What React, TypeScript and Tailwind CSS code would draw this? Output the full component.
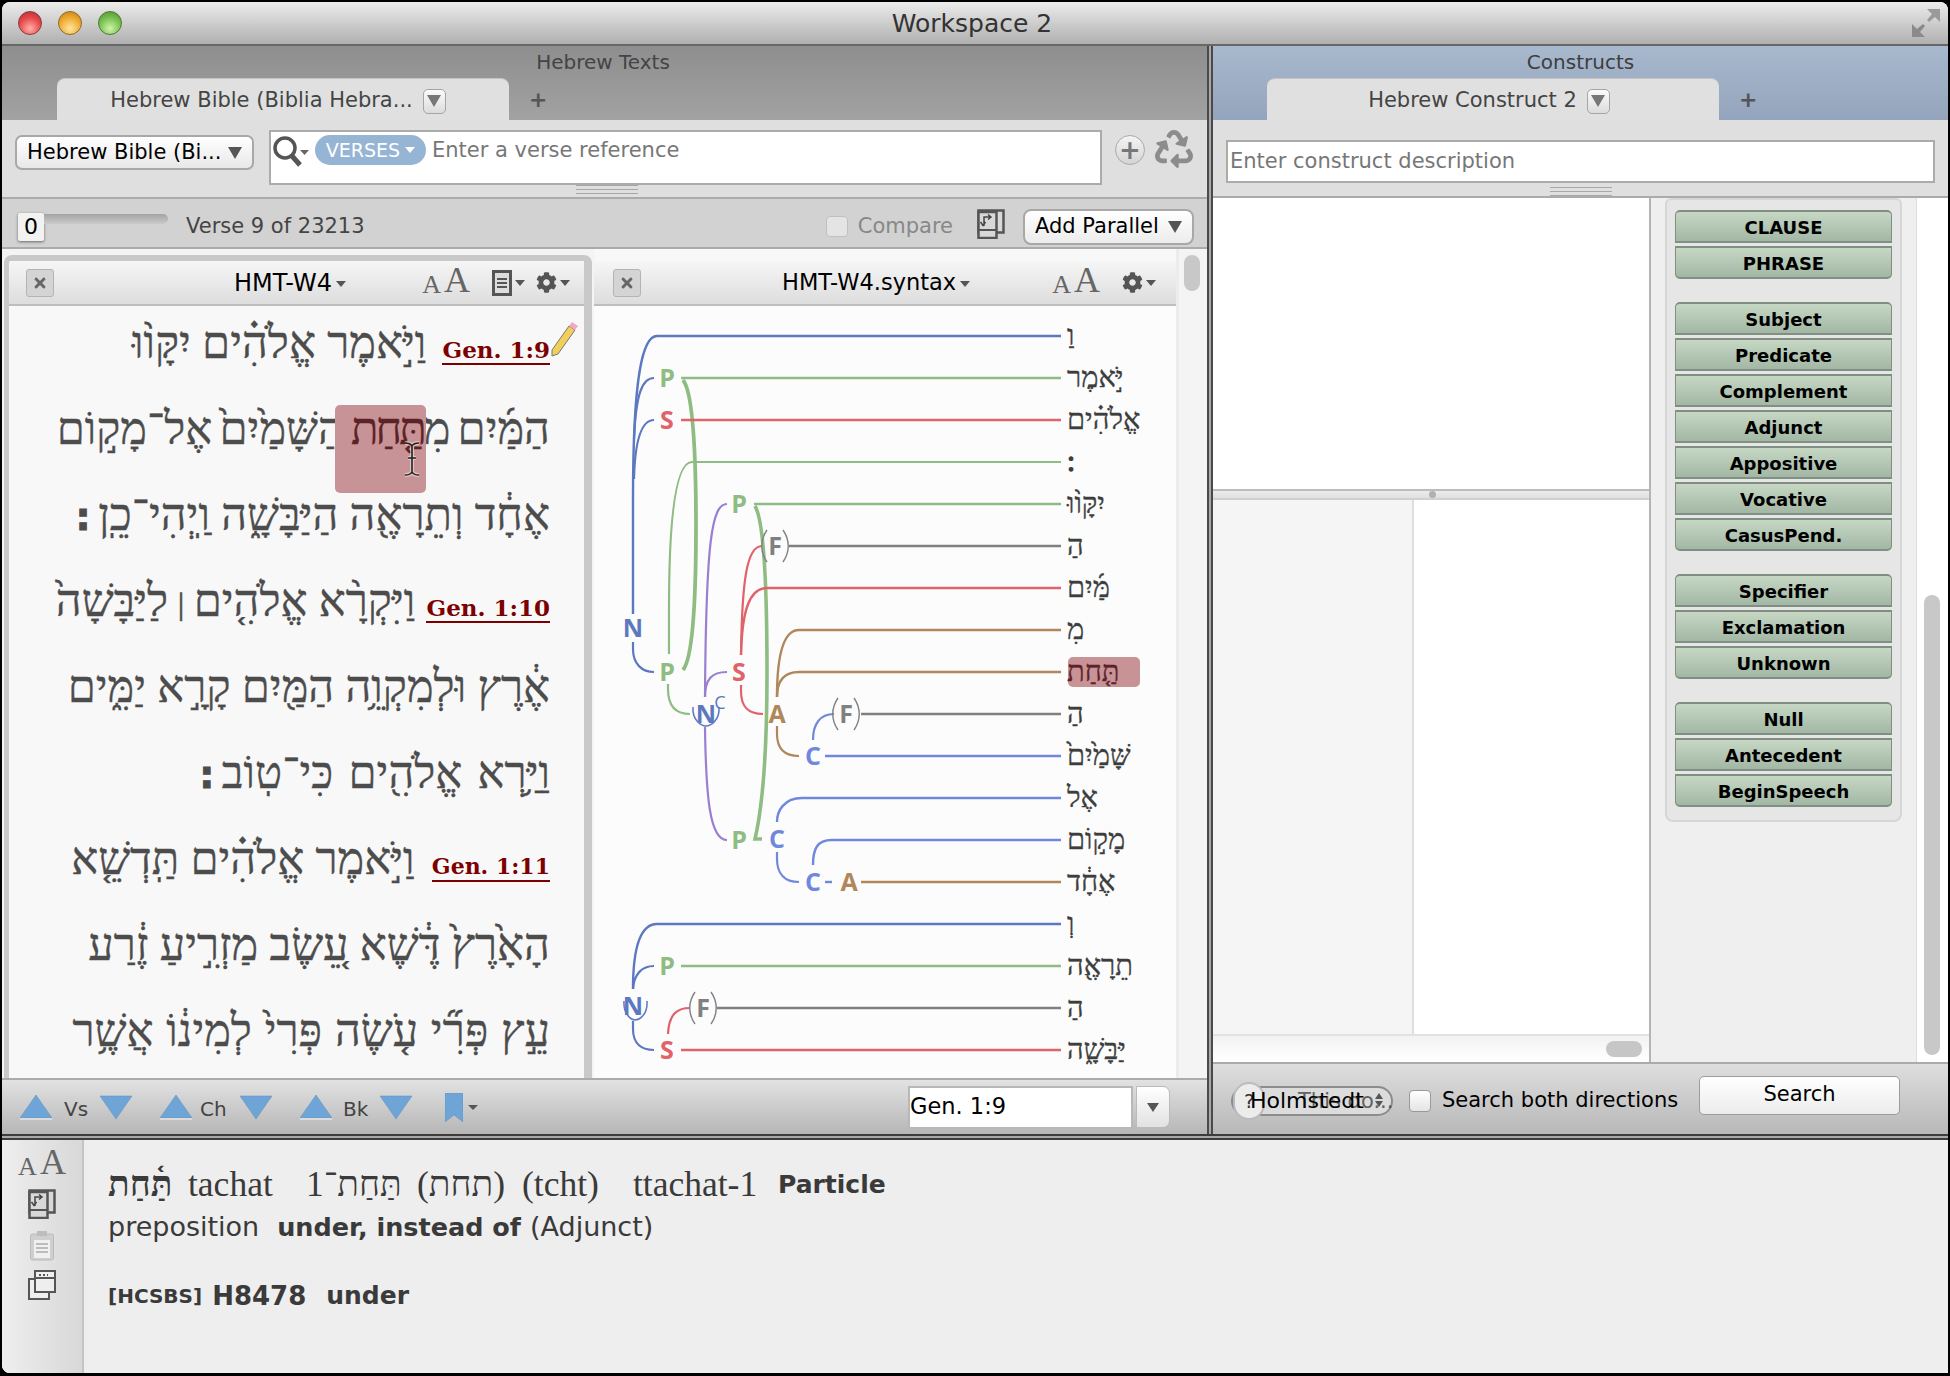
import React from 'react';
import { FaCog, FaRecycle, FaTimes } from 'react-icons/fa';

const sans = { fontFamily: '"DejaVu Sans", sans-serif' };

const Caret = ({ className = 'border-t-[#555]', w = 5, h = 6 }: { className?: string; w?: number; h?: number }) => (
    <svg width={w * 2} height={h} viewBox={`0 0 ${w * 2} ${h}`} className={className}>
        <polygon points={`0,0 ${w * 2},0 ${w},${h}`} fill="currentColor" />
    </svg>
);

const TabChevron = () => (
    <span className="w-[23px] h-[25px] rounded-[5px] border border-[#a5a5a5] bg-linear-to-b from-[#fbfbfb] to-[#dcdcdc] flex items-center justify-center">
        <Caret className="text-[#777]" w={7} h={12} />
    </span>
);

const Grip = () => (
    <div className="flex flex-col gap-[3px] w-[62px]">
        <div className="h-[1px] bg-[#a8a8a8]" />
        <div className="h-[1px] bg-[#a8a8a8]" />
        <div className="h-[1px] bg-[#a8a8a8]" />
    </div>
);

const SizeAA = ({ className = '' }: { className?: string }) => (
    <span className={`flex items-end text-[#666] leading-none ${className}`} style={{ fontFamily: '"Liberation Serif", serif' }}>
        <span className="text-[26px]">A</span>
        <span className="text-[36px] ml-[3px]">A</span>
    </span>
);

const CompareIcon = ({ className = '' }: { className?: string }) => (
    <svg width="28" height="30" viewBox="0 0 28 30" className={className}>
        <rect x="1.5" y="1.5" width="25" height="22" fill="#d8d8d8" stroke="#555" strokeWidth="2.5" />
        <rect x="1.5" y="3" width="18" height="26" fill="#d8d8d8" stroke="#555" strokeWidth="2.5" />
        <path d="M1.5 21 H19.5" stroke="#555" strokeWidth="2" />
        <path d="M7 17 V8 H13 M11 5.5 L14 8 L11 10.5 M8.5 13 L6 16.5 L3.5 13" fill="none" stroke="#444" strokeWidth="1.5" />
    </svg>
);

const CloseBox = () => (
    <span className="w-[28px] h-[28px] shrink-0 rounded-[3px] bg-[#d4d4d4] border border-[#b4b4b4] flex items-center justify-center text-[#666]">
        <FaTimes size={16} />
    </span>
);

const Tri = ({ up }: { up?: boolean }) => (
    <svg width="32" height="25" viewBox="0 0 32 25">
        {up ? (
            <>
                <polygon points="16,0 32,23 0,23" fill="#6fa5d6" stroke="#5d8fbd" strokeWidth="0.5" />
                <rect x="0" y="23" width="32" height="2" fill="#dcdcdc" />
            </>
        ) : (
            <polygon points="0,1 32,1 16,24" fill="#6fa5d6" stroke="#5d8fbd" strokeWidth="0.5" />
        )}
    </svg>
);

const Ref = ({ children, className = 'text-[23px]' }: { children: React.ReactNode; className?: string }) => (
    <span
        dir="ltr"
        className={`inline-block align-baseline font-bold text-[#7d0000] border-b-[2px] border-[#7d0000] leading-[27px] [-webkit-text-stroke:0px] ${className}`}
        style={{ fontFamily: '"DejaVu Serif", serif', unicodeBidi: 'isolate' }}
    >
        {children}
    </span>
);

const SofPasuq = () => (
    <span className="text-[38px] font-bold [-webkit-text-stroke:1px_#4c4c4c] mr-[8px]" style={sans}>׃</span>
);

const lineClass = 'h-[86px] leading-[86px] text-[45px] text-[#4c4c4c] whitespace-nowrap [-webkit-text-stroke:0.4px_#4c4c4c]';

const VerseText = () => (
    <div dir="rtl" className="pr-[34px] -mt-[6px]" style={{ fontFamily: '"Liberation Serif", "DejaVu Sans", serif' }}>
        <div className={`${lineClass} relative`}>
            <Ref className="text-[23px] ml-[5px]">Gen. 1:9</Ref>{' '}
            וַיֹּ֣אמֶר אֱלֹהִ֗ים יִקָּו֨וּ
            <svg width="28" height="36" viewBox="0 0 28 36" className="absolute right-[-28px] top-[22px]">
                <polygon points="2,28 19,4 25,8 8,32 2,34" fill="#f2cf5a" stroke="#777" strokeWidth="1" />
                <polygon points="19,4 22,0 28,4 25,8" fill="#eeaac6" />
            </svg>
        </div>
        <div className={`${lineClass} [word-spacing:-4px]`}>
            הַמַּ֜יִם מִ
            <span className="relative text-[#5c2226] tracking-[-3px] [-webkit-text-stroke:0.4px_#5c2226]">
                <span className="absolute left-[-16px] right-[-2px] top-[1px] h-[88px] rounded-[5px] bg-[#c89396]" />
                <span className="relative">תַּ֤חַת</span>
                <svg width="20" height="36" viewBox="0 0 20 36" className="absolute right-[2px] top-[37px]">
                    <path d="M3 2 C7 2 9 3 10 5 C11 3 13 2 17 2 M10 5 V31 M3 34 C7 34 9 33 10 31 C11 33 13 34 17 34 M6 17 H14" fill="none" stroke="#f4e4e4" strokeWidth="4" opacity="0.6" />
                    <path d="M3 2 C7 2 9 3 10 5 C11 3 13 2 17 2 M10 5 V31 M3 34 C7 34 9 33 10 31 C11 33 13 34 17 34 M6 17 H14" fill="none" stroke="#222" strokeWidth="1.6" />
                </svg>
            </span>{' '}
            הַשָּׁמַ֙יִם֙ אֶל־מָק֣וֹם
        </div>
        <div className={lineClass}>
            אֶחָ֔ד וְתֵרָאֶ֖ה הַיַּבָּשָׁ֑ה וַֽיְהִי־כֵֽן
            <SofPasuq />
        </div>
        <div className={lineClass}>
            <Ref>Gen. 1:10</Ref>{' '}
            וַיִּקְרָ֨א אֱלֹהִ֤ים
            <span className="text-[24px] mx-[6px]">׀</span>
            לַיַּבָּשָׁה֙
        </div>
        <div className={lineClass}>אֶ֔רֶץ וּלְמִקְוֵ֥ה הַמַּ֖יִם קָרָ֣א יַמִּ֑ים</div>
        <div className={`${lineClass} [word-spacing:4px]`}>
            וַיַּ֥רְא אֱלֹהִ֖ים כִּי־טֽוֹב
            <SofPasuq />
        </div>
        <div className={lineClass}>
            <Ref className="text-[22px] ml-[6px]">Gen. 1:11</Ref>{' '}
            וַיֹּ֣אמֶר אֱלֹהִ֗ים תַּֽדְשֵׁ֤א
        </div>
        <div className={lineClass}>הָאָ֙רֶץ֙ דֶּ֔שֶׁא עֵ֚שֶׂב מַזְרִ֣יעַ זֶ֔רַע</div>
        <div className={`${lineClass} [word-spacing:1.5px]`}>עֵ֣ץ פְּרִ֞י עֹ֤שֶׂה פְּרִי֙ לְמִינ֔וֹ אֲשֶׁ֥ר</div>
    </div>
);

const BLUE = '#5b78c0';
const GREEN = '#8fbc82';
const RED = '#e0626a';
const GRAY = '#808080';
const BROWN = '#b0875a';
const PURPLE = '#9b7fcf';
const LBLUE = '#6f88de';

const wires: [string, string, number][] = [
    ['M681 381 C690 392 694 440 694 527 C694 610 690 660 681 671', GREEN, 3.8],
    ['M753 507 C761 520 765 570 765 674 C765 760 760 810 753 840 H760', GREEN, 3.6],
    ['M1059 337 H655 C640 337 631 380 631 500 V615', BLUE, 2.4],
    ['M652 379 C640 379 634 395 632 440', BLUE, 2.2],
    ['M652 421 C640 421 633 440 632 480', BLUE, 2.2],
    ['M631 643 V650 C631 665 640 673 652 673', BLUE, 2.2],
    ['M1059 379 H679', GREEN, 2.4],
    ['M1059 421 H679', RED, 2.4],
    ['M1059 463 H690 C675 463 667 510 667 610 V655', GREEN, 2.2],
    ['M666 685 V690 C666 708 674 715 688 715', GREEN, 2.2],
    ['M725 505 C710 505 704 540 703 698', PURPLE, 2.2],
    ['M725 673 C710 673 703 680 703 698', PURPLE, 2.2],
    ['M703 728 C704 800 708 841 725 841', PURPLE, 2.2],
    ['M1059 505 H752', GREEN, 2.4],
    ['M760 547 C745 547 740 580 739 656', RED, 2.2],
    ['M1059 589 H765 C748 589 740 610 739 656', RED, 2.4],
    ['M739 686 V692 C739 708 746 715 761 715', RED, 2.2],
    ['M1059 547 H787', GRAY, 2.4],
    ['M1059 631 H797 C783 631 775 650 775 698', BROWN, 2.4],
    ['M1059 673 H797 C783 673 775 680 775 698', BROWN, 2.4],
    ['M775 727 V735 C775 750 783 757 797 757', BROWN, 2.2],
    ['M1059 715 H859', GRAY, 2.4],
    ['M832 715 C818 715 811 725 811 741', LBLUE, 2.2],
    ['M1059 757 H823', LBLUE, 2.4],
    ['M1059 799 H800 C782 799 775 812 775 823', LBLUE, 2.4],
    ['M1059 841 H830 C815 841 811 850 811 866', LBLUE, 2.4],
    ['M775 853 V860 C775 875 783 883 797 883', LBLUE, 2.2],
    ['M823 883 H830', LBLUE, 2.4],
    ['M1059 883 H859', BROWN, 2.4],
    ['M1059 925 H655 C640 925 631 945 631 990', BLUE, 2.4],
    ['M652 967 C640 967 632 975 631 990', BLUE, 2.2],
    ['M1059 967 H679', GREEN, 2.4],
    ['M1059 1009 H715', GRAY, 2.4],
    ['M688 1009 C675 1009 667 1015 666 1035', RED, 2.2],
    ['M631 1022 V1030 C631 1045 640 1051 652 1051', BLUE, 2.2],
    ['M1059 1051 H679', RED, 2.4],
    ['M691 708 C690 722 700 727 704 727 C708 727 718 722 717 708', BLUE, 1.5],
    ['M622 1002 C621 1016 630 1021 633 1021 C637 1021 646 1016 645 1002', BLUE, 1.5],
];

const nodes: [string, number, number, string][] = [
    ['N', 631, 629, BLUE],
    ['P', 665, 379, GREEN],
    ['S', 665, 421, RED],
    ['P', 737, 505, GREEN],
    ['F', 773, 547, GRAY],
    ['S', 737, 673, RED],
    ['P', 665, 673, GREEN],
    ['N', 704, 715, BLUE],
    ['A', 775, 715, BROWN],
    ['F', 844, 715, GRAY],
    ['C', 811, 757, LBLUE],
    ['C', 775, 840, LBLUE],
    ['P', 737, 841, GREEN],
    ['C', 811, 883, LBLUE],
    ['A', 847, 883, BROWN],
    ['N', 631, 1007, BLUE],
    ['P', 665, 967, GREEN],
    ['F', 701, 1009, GRAY],
    ['S', 665, 1051, RED],
];

const parens: [number, number][] = [[773, 547], [844, 715], [701, 1009]];

const words = ['וַ', 'יֹּ֣אמֶר', 'אֱלֹהִ֗ים', '׃', 'יִקָּו֨וּ', 'הַ', 'מַּ֜יִם', 'מִ', 'תַּ֤חַת', 'הַ', 'שָּׁמַ֙יִם֙', 'אֶל', 'מָק֣וֹם', 'אֶחָ֔ד', 'וְ', 'תֵרָאֶ֖ה', 'הַ', 'יַּבָּשָׁ֑ה'];

const SyntaxTree = () => (
    <svg width="585" height="771" viewBox="592 307 585 771" className="block">
        <rect x="1066" y="658" width="72" height="30" rx="5" fill="#c89396" />
        {wires.map(([d, c, w], i) => (
            <path key={i} d={d} fill="none" stroke={c} strokeWidth={w} />
        ))}
        {parens.map(([x, y], i) => (
            <g key={i} fill="none" stroke={GRAY} strokeWidth="1.4">
                <path d={`M${x - 8} ${y - 16} C${x - 15} ${y - 6} ${x - 15} ${y + 6} ${x - 8} ${y + 16}`} />
                <path d={`M${x + 8} ${y - 16} C${x + 15} ${y - 6} ${x + 15} ${y + 6} ${x + 8} ${y + 16}`} />
            </g>
        ))}
        {nodes.map(([t, x, y, c], i) => (
            <text key={i} x={x} y={y + 9} textAnchor="middle" fill={c} fontSize="25" fontWeight="700" fontFamily="'Open Sans', sans-serif">
                {t}
            </text>
        ))}
        <text x="718" y="710" textAnchor="middle" fill={BLUE} fontSize="18" fontFamily="'Open Sans', sans-serif">C</text>
        {words.map((w, i) => (
            <text
                key={i}
                x="1065"
                y={337 + i * 42 + 9}
                fill={i === 8 ? '#5c2226' : '#3d3d3d'}
                stroke={i === 8 ? '#5c2226' : '#3d3d3d'}
                strokeWidth={i === 3 ? 1.4 : 0.35}
                fontSize="29"
                fontFamily="'Liberation Serif', 'DejaVu Sans', serif"
            >
                {w}
            </text>
        ))}
    </svg>
);

const PaneHeader = ({ title, extra }: { title: string; extra?: boolean }) => (
    <div className={`h-[45px] shrink-0 flex items-center border-b-[2px] border-[#bdbdbd] bg-linear-to-b from-[#f6f6f6] to-[#dddddd] ${extra ? 'pl-[17px]' : 'pl-[19px]'}`} style={sans}>
        <CloseBox />
        <div className={`flex items-center gap-[4px] text-black ${extra ? 'ml-[180px] text-[24px]' : 'ml-[141px] text-[22.5px]'}`}>
            <span>{title}</span>
            <Caret className="text-[#555] mt-[3px]" />
        </div>
        <div className={`ml-auto flex items-center gap-[11px] text-[#555] ${extra ? 'pr-[14px]' : 'pr-[20px]'}`}>
            <SizeAA className="mr-[11px] mb-[6px]" />
            {extra && (
                <span className="flex items-center gap-[3px]">
                    <span className="w-[20px] h-[26px] border-[3px] border-[#555] bg-[#ddd] flex flex-col gap-[2px] justify-center px-[2px]">
                        <span className="h-[2px] bg-[#555]" />
                        <span className="h-[2px] bg-[#555]" />
                        <span className="h-[2px] bg-[#555]" />
                    </span>
                    <Caret />
                </span>
            )}
            <span className="flex items-center gap-[3px]">
                <FaCog size={21} />
                <Caret />
            </span>
        </div>
    </div>
);

const LeftColumn = () => (
    <div className="w-[1205px] flex flex-col shrink-0">
        <div className="h-[74px] shrink-0 flex flex-col bg-linear-to-b from-[#8e8e8e] to-[#a2a2a2]">
            <div className="h-[32px] flex items-center justify-center text-[20px] text-[#444] pr-[3px]">Hebrew Texts</div>
            <div className="h-[42px] flex items-end pl-[55px]">
                <div className="w-[452px] h-[42px] pt-[3px] pr-[10px] rounded-t-[8px] bg-[#e0e0e0] border-t border-[#c4c4c4] flex items-center justify-center gap-[10px] text-[21px] text-[#444]">
                    <span>Hebrew Bible (Biblia Hebra...</span>
                    <TabChevron />
                </div>
                <span className="ml-[20px] mb-[9px] text-[22px] leading-none text-[#555] font-bold">+</span>
            </div>
        </div>
        <div className="h-[79px] shrink-0 bg-[#dfdfdf] border-b-[2px] border-[#ababab] relative">
            <div className="flex items-start pl-[13px] pt-[11px]">
                <div className="w-[239px] h-[35px] mt-[4px] rounded-[7px] border-[2px] border-[#a8a8a8] bg-linear-to-b from-white to-[#e8e8e8] flex items-center pl-[10px] pr-[10px] justify-between text-[21px] text-black">
                    <span>Hebrew Bible (Bi...</span>
                    <Caret className="text-[#555]" w={7} h={12} />
                </div>
                <div className="ml-[15px] w-[833px] h-[55px] -mt-[1px] bg-white border-[2px] border-[#ababab] flex items-start pt-[3px] pl-[1px]">
                    <svg width="38" height="34" viewBox="0 0 38 34" className="shrink-0">
                        <circle cx="13" cy="13" r="10" fill="none" stroke="#555" strokeWidth="3.5" />
                        <path d="M20 21 L28 30" stroke="#555" strokeWidth="5" />
                        <polygon points="28,15 37,15 32.5,20" fill="#666" />
                    </svg>
                    <span className="ml-[5px] w-[111px] h-[30px] rounded-full bg-[#96b4d4] text-white text-[19px] flex items-center justify-center gap-[5px]">
                        VERSES
                        <Caret className="text-white" />
                    </span>
                    <span className="ml-[6px] text-[21px] text-[#777] leading-[30px]">Enter a verse reference</span>
                </div>
                <span className="ml-[13px] mt-[4px] w-[30px] h-[30px] rounded-full border border-[#aaa] bg-linear-to-b from-[#f4f4f4] to-[#d4d4d4] flex items-center justify-center text-[#777] text-[26px] font-bold leading-none">+</span>
                <span className="ml-[10px] -mt-[1px] text-[#8c8c8c]">
                    <FaRecycle size={38} />
                </span>
            </div>
            <div className="absolute left-[574px] bottom-[3px]">
                <Grip />
            </div>
        </div>
        <div className="h-[50px] shrink-0 bg-[#d2d2d2] border-b-[2px] border-[#ababab] flex items-center pt-[7px] pl-[16px]">
            <div className="flex items-start w-[150px] h-[28px]">
                <span className="w-[26px] h-[28px] bg-[#f2f2f2] rounded-[2px] shadow-[0_1px_3px_#666] flex items-center justify-center text-[22px] text-black">0</span>
                <span className="w-[125px] h-[10px] rounded-r-[5px] bg-linear-to-b from-[#a4a4a4] to-[#cacaca] mt-[1px]" />
            </div>
            <span className="ml-[18px] text-[21px] text-[#444]">Verse 9 of 23213</span>
            <div className="ml-auto flex items-center pr-[13px]">
                <span className="w-[22px] h-[21px] rounded-[4px] border border-[#c0c0c0] bg-[#e4e4e4]" />
                <span className="ml-[10px] text-[21px] text-[#888]">Compare</span>
                <CompareIcon className="ml-[24px] mb-[6px]" />
                <div className="ml-[18px] w-[171px] h-[36px] rounded-[8px] border-[2px] border-[#a8a8a8] bg-linear-to-b from-white to-[#ececec] flex items-center justify-between px-[10px] text-[21px] text-black">
                    <span>Add Parallel</span>
                    <Caret className="text-[#555]" w={7} h={12} />
                </div>
            </div>
        </div>
        <div className="flex-1 flex bg-[#f4f4f4] min-h-0">
            <div className="w-[588px] shrink-0 mt-[6px] ml-[2px] border-l-[5px] border-t-[6px] border-r-[8px] border-[#c9c9c9] rounded-t-[8px] flex flex-col bg-[#f8f8f8] overflow-hidden">
                <PaneHeader title="HMT-W4" extra />
                <VerseText />
            </div>
            <div className="w-[585px] shrink-0 ml-[2px] flex flex-col bg-[#fcfcfc] border-r-[3px] border-[#ececec] overflow-hidden">
                <div className="h-[12px] shrink-0 bg-[#f8f8f8]" />
                <PaneHeader title="HMT-W4.syntax" />
                <SyntaxTree />
            </div>
            <div className="flex-1 pl-[5px] pt-[6px]">
                <div className="w-[16px] h-[36px] rounded-full bg-[#c8c8c8]" />
            </div>
        </div>
        <div className="h-[56px] shrink-0 border-t-[2px] border-[#ababab] bg-linear-to-b from-[#e2e2e2] to-[#b6b6b6] flex items-center pl-[18px] text-[#444]">
            <Tri up />
            <span className="ml-[12px] mt-[3px] text-[20px] w-[36px]">Vs</span>
            <Tri />
            <span className="ml-[28px]"><Tri up /></span>
            <span className="ml-[8px] mt-[3px] text-[20px] w-[40px]">Ch</span>
            <Tri />
            <span className="ml-[28px]"><Tri up /></span>
            <span className="ml-[11px] mt-[3px] text-[20px] w-[37px]">Bk</span>
            <Tri />
            <svg width="18" height="29" viewBox="0 0 18 29" className="ml-[33px]">
                <polygon points="0,0 18,0 18,29 9,22 0,29" fill="#6fa5d6" stroke="#5d8fbd" strokeWidth="0.5" />
            </svg>
            <Caret className="ml-[5px] text-[#555]" w={5} h={5} />
            <div className="ml-auto flex items-center pr-[37px]">
                <div className="w-[225px] h-[43px] bg-white border-[2px] border-[#b8b8b8] flex items-center text-[22.5px] text-black">Gen. 1:9</div>
                <div className="ml-[3px] w-[34px] h-[42px] rounded-r-[7px] border border-[#bbb] bg-linear-to-b from-white to-[#e2e2e2] flex items-center justify-center">
                    <Caret className="text-[#555]" w={6} h={9} />
                </div>
            </div>
        </div>
    </div>
);

const group = (items: string[]) => (
    <div className="flex flex-col gap-[3px]">
        {items.map((t, i) => (
            <div
                key={t}
                className={`h-[33px] flex items-center justify-center pt-[2px] text-[18px] font-bold text-black bg-linear-to-b from-[#c6d8c4] to-[#a3b7a5] border-x border-y-[2px] border-[#7f9083] ${i === 0 ? 'rounded-t-[5px]' : ''} ${i === items.length - 1 ? 'rounded-b-[5px]' : ''}`}
            >
                {t}
            </div>
        ))}
    </div>
);

const RightColumn = () => (
    <div className="flex-1 flex flex-col min-w-0">
        <div className="h-[74px] shrink-0 flex flex-col bg-linear-to-b from-[#a8b9ce] to-[#93a4bc]">
            <div className="h-[32px] flex items-center justify-center text-[20px] text-[#3e3e3e]">Constructs</div>
            <div className="h-[42px] flex items-end pl-[54px]">
                <div className="w-[452px] h-[42px] pt-[3px] pr-[8px] rounded-t-[8px] bg-[#e0e0e0] border-t border-[#c4c4c4] flex items-center justify-center gap-[10px] text-[21px] text-[#444]">
                    <span>Hebrew Construct 2</span>
                    <TabChevron />
                </div>
                <span className="ml-[20px] mb-[9px] text-[22px] leading-none text-[#555] font-bold">+</span>
            </div>
        </div>
        <div className="h-[78px] shrink-0 bg-[#dfdfdf] border-b-[2px] border-[#ababab] flex flex-col items-center pt-[20px] px-[13px]">
            <div className="w-full h-[44px] bg-white border-[2px] border-[#ababab] flex items-center pl-[2px] text-[21px] text-[#777]">Enter construct description</div>
            <div className="mt-[4px]">
                <Grip />
            </div>
        </div>
        <div className="flex-1 flex min-h-0">
            <div className="w-[436px] shrink-0 flex flex-col bg-white">
                <div className="h-[291px] shrink-0" />
                <div className="h-[11px] shrink-0 border-t-[2px] border-[#bcbcbc] bg-linear-to-b from-[#ececec] to-[#e0e0e0] border-b-[2px] border-b-[#d0d0d0] flex justify-center">
                    <span className="w-[7px] h-[7px] rounded-full bg-[#b0b0b0] mr-[-3px]" />
                </div>
                <div className="flex-1 flex min-h-0">
                    <div className="w-[201px] bg-[#f5f5f5] border-r-[2px] border-[#dedede]" />
                    <div className="flex-1 bg-white" />
                </div>
                <div className="h-[28px] shrink-0 border-t-[2px] border-[#e2e2e2] bg-linear-to-b from-[#f2f2f2] to-[#ffffff] flex items-center justify-end pr-[7px]">
                    <span className="w-[36px] h-[16px] rounded-full bg-[#c6c6c6]" />
                </div>
            </div>
            <div className="flex-1 flex bg-[#efefef] border-l-[2px] border-[#b4b4b4]">
                <div className="w-[266px] shrink-0 border-r-[1px] border-[#dcdcdc] pl-[14px]">
                    <div className="w-[237px] h-[624px] rounded-b-[8px] rounded-t-[6px] border-[2px] border-[#d6d6d6] bg-[#e6e6e6] px-[8px] pt-[10px] flex flex-col gap-[23px]">
                        {group(['CLAUSE', 'PHRASE'])}
                        {group(['Subject', 'Predicate', 'Complement', 'Adjunct', 'Appositive', 'Vocative', 'CasusPend.'])}
                        {group(['Specifier', 'Exclamation', 'Unknown'])}
                        {group(['Null', 'Antecedent', 'BeginSpeech'])}
                    </div>
                </div>
                <div className="flex-1 pl-[7px] pt-[397px] bg-white">
                    <div className="w-[16px] h-[460px] rounded-full bg-[#c8c8c8]" />
                </div>
            </div>
        </div>
        <div className="h-[72px] shrink-0 border-t-[2px] border-[#ababab] bg-linear-to-b from-[#dedede] to-[#b8b8b8] flex items-center pl-[18px]">
            <div className="relative w-[162px] h-[30px] mt-[4px] rounded-full border-[2px] border-[#8c8c8c] bg-[#dcdcdc] whitespace-nowrap">
                <span className="absolute left-[0px] top-[-6px] w-[32px] h-[38px] rounded-full border-[2px] border-[#bbb] bg-[#ececec]" />
                <span className="absolute left-[11px] top-[0px] text-[20px] leading-[26px] text-[#333]">?</span>
                <span className="absolute left-[142px] top-[5px] flex flex-col gap-[2px] text-[#555]">
                    <Caret className="rotate-180" w={4} h={6} />
                    <Caret w={4} h={6} />
                </span>
                <span className="absolute left-[65px] top-[0px] text-[21px] leading-[26px] text-[#444] opacity-80">This do...</span>
                <span className="absolute left-[17px] top-[0px] text-[22px] leading-[26px] text-black">Holmstedt</span>
            </div>
            <span className="ml-[16px] mt-[4px] w-[22px] h-[22px] rounded-[4px] border border-[#999] bg-linear-to-b from-white to-[#e4e4e4]" />
            <span className="ml-[11px] mt-[3px] text-[21px] text-black">Search both directions</span>
            <div className="ml-auto mr-[48px] mb-[8px] w-[201px] h-[39px] rounded-[5px] border border-[#9c9c9c] bg-linear-to-b from-white to-[#ececec] flex items-center justify-center text-[21px] text-black">Search</div>
        </div>
    </div>
);

const InfoPanel = () => (
    <div className="flex-1 flex bg-[#eeeeee] min-h-0">
        <div className="w-[82px] shrink-0 border-r-[2px] border-[#c4c4c4] bg-linear-to-r from-[#eeeeee] to-[#d8d8d8] flex flex-col items-center">
            <div className="mt-[10px] h-[30px] flex items-end">
                <SizeAA />
            </div>
            <CompareIcon className="mt-[9px]" />
            <svg width="24" height="30" viewBox="0 0 24 30" className="mt-[12px]">
                <rect x="0.5" y="3" width="23" height="26" rx="2" fill="#cfcfcf" stroke="#bbb" />
                <rect x="7" y="0" width="10" height="5" fill="#bdbdbd" />
                <rect x="4" y="9" width="16" height="18" fill="#f0f0f0" />
                <path d="M6 13 H18 M6 17 H18 M6 21 H18" stroke="#aaa" strokeWidth="1.5" />
            </svg>
            <svg width="28" height="30" viewBox="0 0 28 30" className="mt-[9px]">
                <rect x="1" y="9" width="20" height="20" fill="#eee" stroke="#555" strokeWidth="2" />
                <rect x="7" y="1" width="20" height="21" fill="#eee" stroke="#555" strokeWidth="2" />
                <path d="M7 8 H27" stroke="#555" strokeWidth="2" />
                <path d="M11 5 H20" stroke="#555" strokeWidth="2" strokeDasharray="2 2" />
            </svg>
        </div>
        <div className="pl-[24px] pt-[22px] text-[#3a3a3a]">
            <div className="h-[46px] flex items-center text-[35.5px] whitespace-nowrap" style={{ fontFamily: '"Liberation Serif", "DejaVu Sans", serif' }}>
                <span className="w-[80px] font-bold">תַּ֫חַת</span>
                <span className="w-[118px]">tachat</span>
                <span className="w-[111px] flex">
                    <span>1</span>
                    <span>־</span>
                    <span>תַּחַת</span>
                </span>
                <span className="w-[105px]">(תחת)</span>
                <span className="w-[111px]">(tcht)</span>
                <span className="w-[145px]">ttachat-1</span>
                <span className="text-[25px] font-bold" style={sans}>Particle</span>
            </div>
            <div className="h-[38px] flex items-center text-[27px] whitespace-nowrap">
                <span>preposition</span>
                <span className="ml-[18px] text-[25.5px] font-bold">under, instead of</span>
                <span className="ml-[9px]">(Adjunct)</span>
            </div>
            <div className="mt-[30px] h-[40px] flex items-center font-bold whitespace-nowrap">
                <span className="text-[20px]">[HCSBS]</span>
                <span className="ml-[10px] text-[26px]">H8478</span>
                <span className="ml-[20px] text-[25px]">under</span>
            </div>
        </div>
    </div>
);

export default function App() {
    return (
        <div className="w-[1950px] h-[1376px] bg-black pt-[2px] pl-[2px] pr-[2px] pb-[3px] overflow-hidden" style={sans}>
            <div className="h-full flex flex-col rounded-t-[8px] rounded-bl-[8px] overflow-hidden bg-[#eee]">
                <div className="h-[44px] shrink-0 border-b-[2px] border-[#676767] bg-linear-to-b from-[#ececec] to-[#b0b0b0] flex items-center">
                    <div className="flex gap-[16px] pl-[16px]">
                        <span className="w-[24px] h-[24px] rounded-full border border-[#8a3a3a] bg-[radial-gradient(circle_at_50%_75%,#ffb0a8,#e8484a_55%,#b02a30)]" />
                        <span className="w-[24px] h-[24px] rounded-full border border-[#8f6a22] bg-[radial-gradient(circle_at_50%_75%,#ffe6a0,#eeaa30_55%,#c07a18)]" />
                        <span className="w-[24px] h-[24px] rounded-full border border-[#4a7a32] bg-[radial-gradient(circle_at_50%_75%,#d0f4a8,#78c050_55%,#4c8c30)]" />
                    </div>
                    <div className="flex-1 text-center text-[25px] text-[#333] pr-[90px] pt-[2px]">Workspace 2</div>
                    <svg width="28" height="28" viewBox="0 0 28 28" className="mr-[8px]">
                        <polygon points="15,0 28,0 28,13 23,8 17,13 15,11 20,5" fill="#9a9a9a" />
                        <polygon points="13,28 0,28 0,15 5,20 11,15 13,17 8,23" fill="#8a8a8a" />
                    </svg>
                </div>
                <div className="h-[1088px] shrink-0 flex">
                    <LeftColumn />
                    <div className="w-[6px] shrink-0 border-x-[2px] border-[#4a4a4a] bg-[#a8a8a8]" />
                    <RightColumn />
                </div>
                <div className="h-[6px] shrink-0 border-y-[2px] border-[#3c3c3c] bg-[#a8a8a8]" />
                <InfoPanel />
            </div>
        </div>
    );
}
